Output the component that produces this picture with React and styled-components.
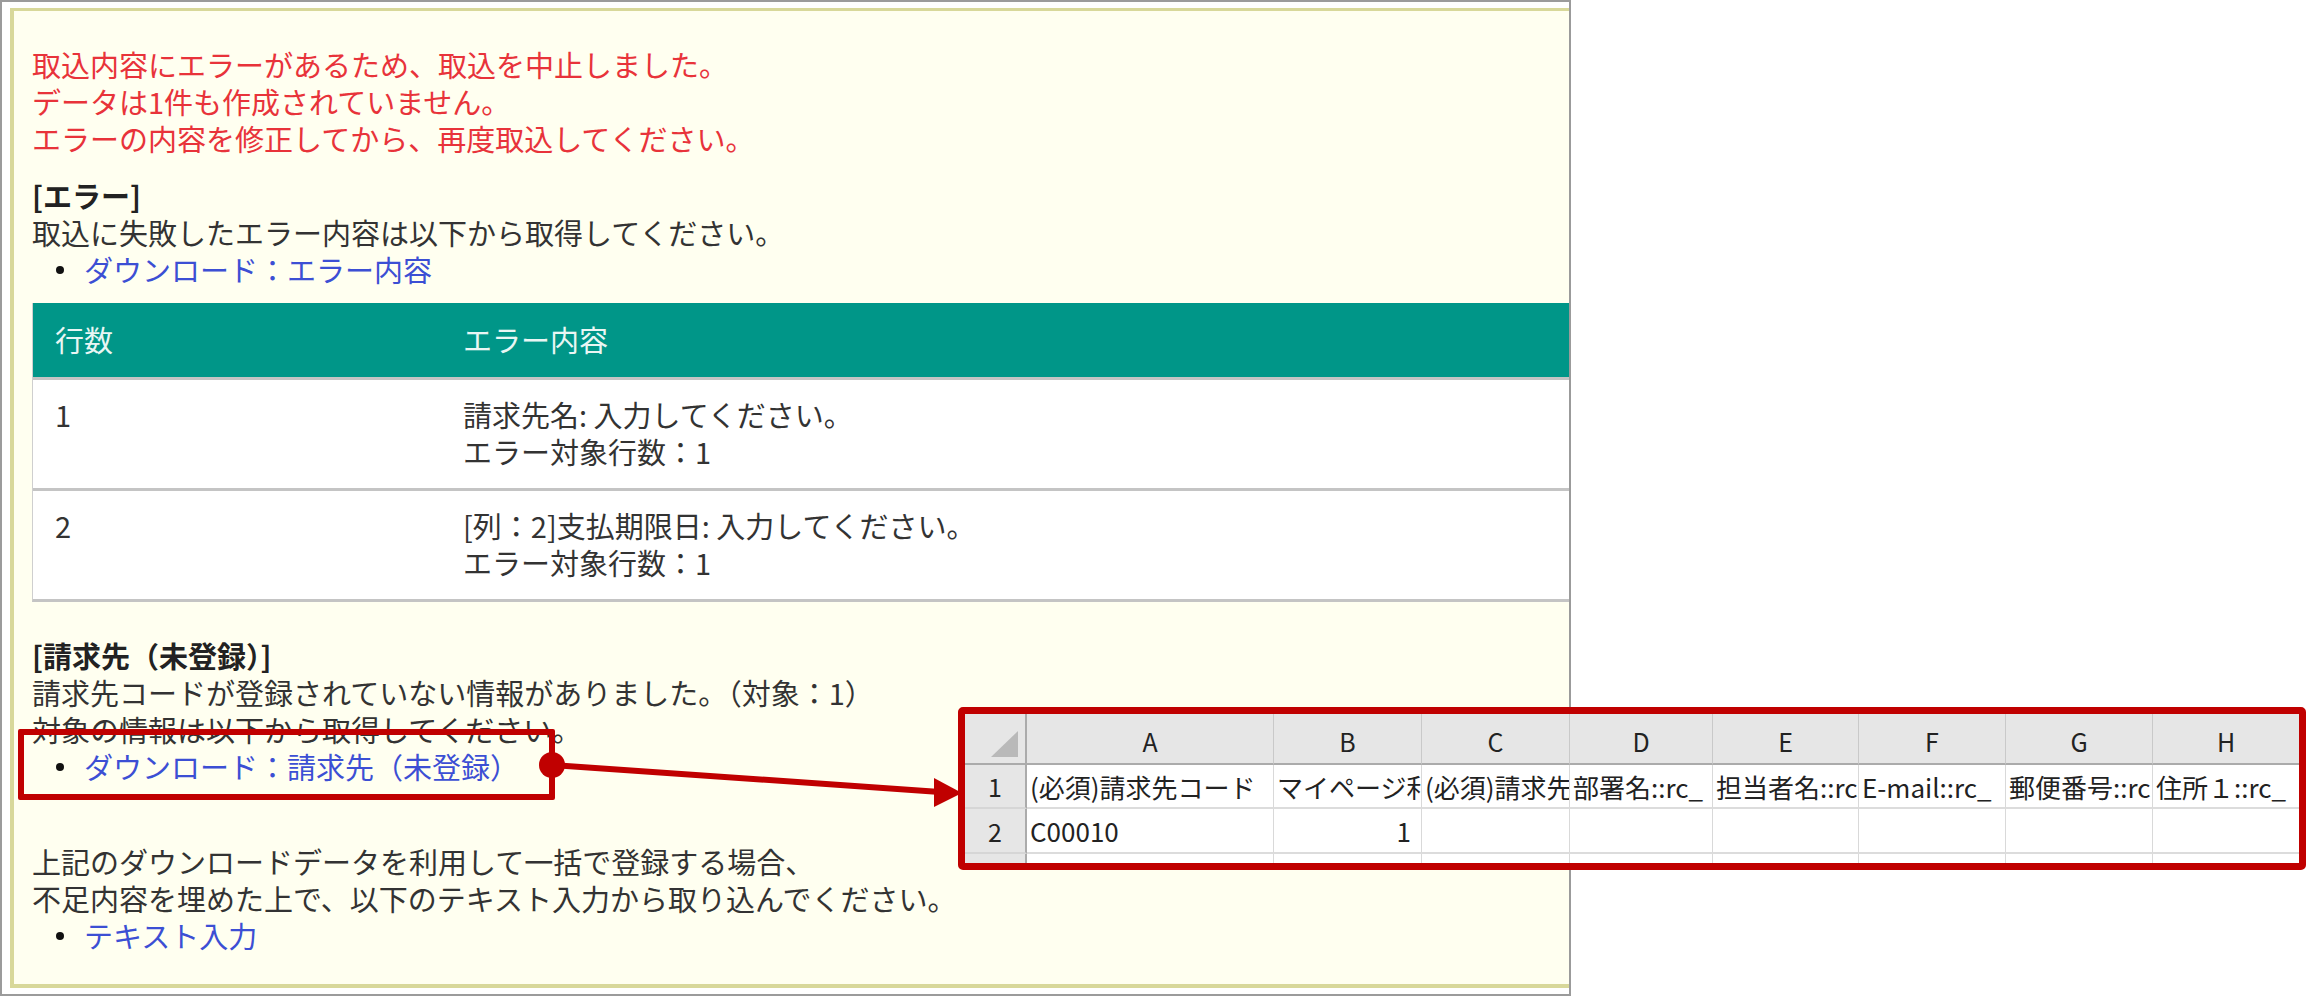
import React from "react";
import styled, { createGlobalStyle } from "styled-components";

const GlobalStyle = createGlobalStyle`
  body {
    margin: 0;
    background: #ffffff;
    font-family: "Noto Sans CJK JP", "Noto Sans", sans-serif;
  }
`;

const Stage = styled.div`
  position: relative;
  width: 2309px;
  height: 998px;
  overflow: hidden;
`;

const Frame = styled.div`
  width: 1571px;
  height: 996px;
  box-sizing: border-box;
  border: 2px solid #9b9b9b;
  padding: 6px 0 6px 8px;
  display: flex;
  overflow: hidden;
`;

const Panel = styled.div`
  flex: none;
  width: 1620px;
  background: #fffff0;
  border-top: 3px solid #d8d89a;
  border-left: 4px solid #d8d89a;
  border-bottom: 4px solid #d8d89a;
  padding: 35px 0 0 18px;
  font-size: 29px;
  line-height: 37px;
  color: #333333;
`;

const Message = styled.div`
  color: #e8333a;
`;

const Section = styled.div`
  margin-top: ${(p) => p.$gap || 0}px;
`;

const Heading = styled.div`
  font-weight: bold;
  color: #222222;
`;

const List = styled.ul`
  list-style: none;
  margin: 0;
  padding: 0;
`;

const Item = styled.li`
  display: flex;
  align-items: center;
  &::before {
    content: "";
    width: 8px;
    height: 8px;
    border-radius: 50%;
    background: #111111;
    margin: 0 20px 0 24px;
  }
`;

const Link = styled.a`
  color: #3c4fd4;
  text-decoration: none;
`;

const ErrorTable = styled.div`
  margin-top: 15px;
  width: 1560px;
  display: grid;
  grid-template-columns: 408px 1fr;
  background: #ffffff;
  border-left: 1px solid #cfcfcf;
  border-bottom: 3px solid #c4c4c4;
`;

const HeadCell = styled.div`
  background: #009688;
  color: #e9f6f4;
  padding: 18px 22px 19px;
`;

const BodyCell = styled.div`
  border-top: 3px solid #c4c4c4;
  padding: 16px 22px 18px;
  color: #333333;
  min-height: 74px;
`;

const HighlightBox = styled.div`
  position: absolute;
  left: 18px;
  top: 729px;
  width: 537px;
  height: 71px;
  box-sizing: border-box;
  border: 6px solid #c00000;
  border-radius: 2px;
`;

const Annotation = styled.svg`
  position: absolute;
  left: 0;
  top: 0;
  pointer-events: none;
`;

const Sheet = styled.div`
  position: absolute;
  left: 958px;
  top: 707px;
  width: 1348px;
  height: 163px;
  box-sizing: border-box;
  border: 7px solid #c00000;
  border-radius: 5px;
  background: #ffffff;
  overflow: hidden;
  display: grid;
  grid-template-columns: 62px 247px 148px 148px 143px 146px 147px 147px 147px;
  grid-template-rows: 51px 44px 45px 20px;
  font-family: "Noto Sans CJK JP", "Noto Sans", sans-serif;
  font-size: 26px;
  color: #222222;
`;

const ColHead = styled.div`
  background: #e6e6e6;
  border-right: 1px solid #c9c9c9;
  border-bottom: 2px solid #ababab;
  display: flex;
  align-items: center;
  justify-content: center;
  font-size: 25px;
  padding-top: 4px;
`;

const Corner = styled(ColHead)`
  border-right: 2px solid #ababab;
  align-items: flex-end;
  justify-content: flex-end;
  padding: 0 7px 6px 0;
  &::after {
    content: "";
    width: 27px;
    height: 26px;
    background: #b9b9b9;
    clip-path: polygon(100% 0, 100% 100%, 0 100%);
  }
`;

const RowHead = styled.div`
  background: #e6e6e6;
  border-right: 2px solid #ababab;
  border-bottom: 2px solid #d6d6d6;
  display: flex;
  align-items: center;
  justify-content: center;
  font-size: 25px;
`;

const Cell = styled.div`
  border-right: 1px solid #d9d9d9;
  border-bottom: 2px solid #dcdcdc;
  display: flex;
  align-items: center;
  justify-content: ${(p) => (p.$right ? "flex-end" : "flex-start")};
  padding: 0 ${(p) => (p.$right ? "10px" : "0")} 0 3px;
  white-space: nowrap;
  overflow: hidden;
`;

const columns = ["A", "B", "C", "D", "E", "F", "G", "H"];
const headerRow = [
  "(必須)請求先コード",
  "マイページ利用",
  "(必須)請求先名",
  "部署名::rc_",
  "担当者名::rc",
  "E-mail::rc_",
  "郵便番号::rc",
  "住所１::rc_",
];

const errors = [
  { row: "1", lines: ["請求先名: 入力してください。", "エラー対象行数：1"] },
  { row: "2", lines: ["[列：2]支払期限日: 入力してください。", "エラー対象行数：1"] },
];

export default function App() {
  return (
    <Stage>
      <GlobalStyle />
      <Frame>
        <Panel>
          <Message>
            <div>取込内容にエラーがあるため、取込を中止しました。</div>
            <div>データは1件も作成されていません。</div>
            <div>エラーの内容を修正してから、再度取込してください。</div>
          </Message>

          <Section $gap={20}>
            <Heading>[エラー]</Heading>
            <div>取込に失敗したエラー内容は以下から取得してください。</div>
            <List>
              <Item>
                <Link href="#">ダウンロード：エラー内容</Link>
              </Item>
            </List>
          </Section>

          <ErrorTable>
            <HeadCell>行数</HeadCell>
            <HeadCell>エラー内容</HeadCell>
            {errors.map((e) => (
              <React.Fragment key={e.row}>
                <BodyCell>{e.row}</BodyCell>
                <BodyCell>
                  {e.lines.map((l) => (
                    <div key={l}>{l}</div>
                  ))}
                </BodyCell>
              </React.Fragment>
            ))}
          </ErrorTable>

          <Section $gap={35}>
            <Heading>[請求先（未登録）]</Heading>
            <div>請求先コードが登録されていない情報がありました。（対象：1）</div>
            <div>対象の情報は以下から取得してください。</div>
            <List>
              <Item>
                <Link href="#">ダウンロード：請求先（未登録）</Link>
              </Item>
            </List>
          </Section>

          <Section $gap={58}>
            <div>上記のダウンロードデータを利用して一括で登録する場合、</div>
            <div>不足内容を埋めた上で、以下のテキスト入力から取り込んでください。</div>
            <List>
              <Item>
                <Link href="#">テキスト入力</Link>
              </Item>
            </List>
          </Section>
        </Panel>
      </Frame>

      <HighlightBox />

      <Annotation width="2309" height="998" viewBox="0 0 2309 998">
        <line x1="552" y1="765" x2="940" y2="792" stroke="#c00000" strokeWidth="6" />
        <circle cx="552" cy="765" r="13" fill="#c00000" />
        <polygon points="934,778 962,793 934,807" fill="#c00000" />
      </Annotation>

      <Sheet>
        <Corner />
        {columns.map((c) => (
          <ColHead key={c}>{c}</ColHead>
        ))}
        <RowHead>1</RowHead>
        {headerRow.map((t) => (
          <Cell key={t}>{t}</Cell>
        ))}
        <RowHead>2</RowHead>
        <Cell>C00010</Cell>
        <Cell $right>1</Cell>
        {columns.slice(2).map((c) => (
          <Cell key={c} />
        ))}
        <RowHead />
        {columns.map((c) => (
          <Cell key={c} />
        ))}
      </Sheet>
    </Stage>
  );
}
